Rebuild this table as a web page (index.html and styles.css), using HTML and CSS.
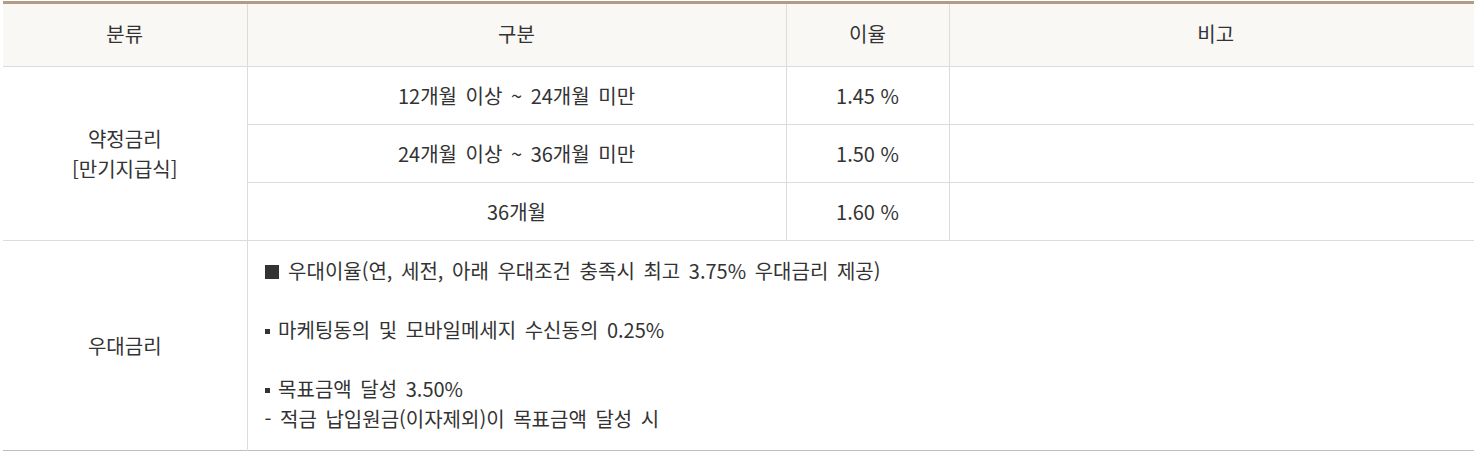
FILE: index.html
```html
<!DOCTYPE html>
<html lang="ko">
<head>
  <meta charset="UTF-8" />
  <title>금리 안내</title>
  <link rel="stylesheet" href="styles.css">
</head>
<body>
  <table class="rate-table">
    <colgroup>
      <col class="c1">
      <col class="c2">
      <col class="c3">
      <col class="c4">
    </colgroup>
    <thead>
      <tr>
        <th>분류</th>
        <th>구분</th>
        <th>이율</th>
        <th>비고</th>
      </tr>
    </thead>
    <tbody>
      <tr>
        <td rowspan="3">약정금리<br>[만기지급식]</td>
        <td>12개월 이상 ~ 24개월 미만</td>
        <td class="rate">1.45 %</td>
        <td></td>
      </tr>
      <tr>
        <td>24개월 이상 ~ 36개월 미만</td>
        <td class="rate">1.50 %</td>
        <td></td>
      </tr>
      <tr>
        <td>36개월</td>
        <td class="rate">1.60 %</td>
        <td></td>
      </tr>
      <tr class="last">
        <td>우대금리</td>
        <td colspan="3" class="desc">
          <span class="big-sq"></span> 우대이율(연, 세전, 아래 우대조건 충족시 최고 3.75% 우대금리 제공)<br><br>
          <span class="sm-sq"></span> 마케팅동의 및 모바일메세지 수신동의 0.25%<br><br>
          <span class="sm-sq"></span> 목표금액 달성 3.50%<br>
          - 적금 납입원금(이자제외)이 목표금액 달성 시
        </td>
      </tr>
    </tbody>
  </table>
</body>
</html>
```

FILE: styles.css
```css
* {
  box-sizing: border-box;
}
body {
  margin: 0;
  padding: 1px 0 0 3px;
  background: #fff;
  font-family: "Noto Sans CJK KR", "Noto Sans", sans-serif;
  color: #333;
}
.rate-table {
  width: 1480px;
  border-collapse: collapse;
  table-layout: fixed;
  border-top: 3px solid #b39c86;
  border-bottom: 1px solid #bdbdbd;
  font-size: 20px;
  word-spacing: 3px;
}
.c1 { width: 244px; }
.c2 { width: 539px; }
.c3 { width: 163px; }
.c4 { width: auto; }
th, td {
  border: 1px solid #dcdcdc;
  text-align: center;
  font-weight: normal;
  padding: 0;
  height: 58px;
  line-height: 30px;
}
th {
  background: #f9f8f5;
  height: 64px;
  padding-bottom: 3px;
  border-top: none;
}
tr th:first-child,
tr td:first-child {
  border-left: none;
}
.rate {
  word-spacing: 0;
}
.last td {
  border-bottom: none;
}
.desc {
  text-align: left;
  padding: 15px 17px 17px;
  line-height: 29.5px;
  border-right: none;
}
.big-sq {
  display: inline-block;
  width: 14px;
  height: 14px;
  background: #333;
  margin-right: 1px;
}
.sm-sq {
  display: inline-block;
  width: 5px;
  height: 5px;
  background: #333;
  vertical-align: 4px;
}
```
